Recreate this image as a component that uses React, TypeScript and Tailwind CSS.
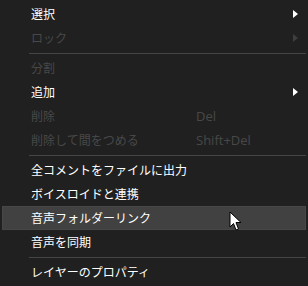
import React from 'react'

type Item =
  | { type: 'sep' }
  | { type: 'item'; label: string; disabled?: boolean; submenu?: boolean; shortcut?: string; active?: boolean }

const items: Item[] = [
  { type: 'item', label: '選択', submenu: true },
  { type: 'item', label: 'ロック', submenu: true, disabled: true },
  { type: 'sep' },
  { type: 'item', label: '分割', disabled: true },
  { type: 'item', label: '追加', submenu: true },
  { type: 'item', label: '削除', disabled: true, shortcut: 'Del' },
  { type: 'item', label: '削除して間をつめる', disabled: true, shortcut: 'Shift+Del' },
  { type: 'sep' },
  { type: 'item', label: '全コメントをファイルに出力' },
  { type: 'item', label: 'ボイスロイドと連携' },
  { type: 'item', label: '音声フォルダーリンク', active: true },
  { type: 'item', label: '音声を同期' },
  { type: 'sep' },
  { type: 'item', label: 'レイヤーのプロパティ' },
]

function Arrow({ disabled }: { disabled?: boolean }) {
  return (
    <svg width="6" height="8" viewBox="0 0 6 8" className={disabled ? 'text-[#3e3e3e]' : 'text-white'}>
      <path d="M0 0 L5 4 L0 8 Z" fill="currentColor" />
    </svg>
  )
}

// mouse pointer over the hovered row
function Cursor() {
  return (
    <svg width="14" height="22" viewBox="0 0 14 22" className="absolute left-[229px] top-[211px]">
      <path
        d="M1 1 L1 16 L4.5 12.5 L7 19 L9.5 18 L7 11.5 L12 11.5 Z"
        fill="#ffffff"
        stroke="#000000"
        strokeWidth="1"
        strokeLinejoin="miter"
      />
    </svg>
  )
}

export default function App() {
  return (
    <div className="relative w-[308px] h-[286px] overflow-hidden bg-[#202020] pt-[2px] font-['Noto_Sans_CJK_JP','Noto_Sans',sans-serif] text-[12px]">
      {items.map((it, i) =>
        it.type === 'sep' ? (
          <div key={i} className="h-[6px] flex items-center pl-[29px] pr-[2px]">
            <div className="h-px w-full bg-[#454545]" />
          </div>
        ) : (
          <div
            key={i}
            className={`h-6 mx-[2px] flex items-center pl-[29px] pr-[7px] ${
              it.active ? 'bg-[#414141] ring-1 ring-inset ring-[#474747]' : ''
            } ${it.disabled ? 'text-[#484848]' : 'text-white'}`}
          >
            <span className="w-[165px] leading-none">{it.label}</span>
            {it.shortcut && (
              <span className="font-['Open_Sans',sans-serif] text-[13px] leading-none">{it.shortcut}</span>
            )}
            <div className="flex-1" />
            {it.submenu && <Arrow disabled={it.disabled} />}
          </div>
        )
      )}
      <Cursor />
    </div>
  )
}
